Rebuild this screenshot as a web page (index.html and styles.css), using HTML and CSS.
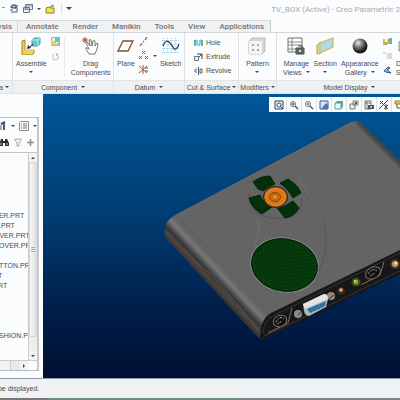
FILE: index.html
```html
<!DOCTYPE html>
<html lang="en">
<head>
<meta charset="utf-8">
<title>TV_BOX (Active) - Creo Parametric 2</title>
<link rel="stylesheet" href="styles.css">
</head>
<body>
<div class="app">
  <header class="titlebar">
    <div class="quick">
      <span class="dot"></span>
      <button aria-label="Regenerate"><svg width="10" height="10" viewBox="0 0 10 10"><path d="M1 3h3M1 6h3M2 8h6V5" fill="none" stroke="#557" /><path d="M3 1h4v3H3z" fill="#a8cce0" stroke="#345"/><path d="M6 4l3-3M9 4H6" stroke="#258" fill="none"/></svg></button>
      <button aria-label="Windows"><svg width="10" height="10" viewBox="0 0 10 10"><path d="M2.500 .5h7v5h-7zM.5 3.500h6v5h-6z" fill="#e9eef3" stroke="#678"/><path d="M3 2h6M1 5h5" stroke="#89a"/></svg><i class="caret"></i></button>
      <button aria-label="Close window"><svg width="10" height="10" viewBox="0 0 10 10"><path d="M1 4l3-1 1 1h4v5H1z" fill="#f5e04c" stroke="#8d8228"/><path d="M5 3l3-2v2" fill="none" stroke="#575"/></svg></button>
      <button class="more" aria-label="Customize"><i class="caret big"></i></button>
    </div>
    <h1>TV_BOX (Active) - Creo Parametric 2</h1>
  </header>
  <nav class="tabs">
    <button class="cut">Analysis</button><button>Annotate</button><button>Render</button><button>Manikin</button><button>Tools</button><button>View</button><button>Applications</button>
  </nav>
  <div class="ribbon">
    <section class="group data"><div class="tools"></div><h2>Data<i class="caret"></i></h2></section>
    <section class="group component">
      <div class="tools">
        <button class="tool">
          <svg width="20" height="18" viewBox="0 0 20 18"><path d="M1 4l3-1v10h9v3l-2 2H1z" fill="#efcf54" stroke="#a98a26"/><path d="M4 13h9" stroke="#fff0a0"/><path d="M11 3l2-2h6v6l-2 2h-6z" fill="#66c6d2" stroke="#4c9ca8"/><path d="M11 3h6v6M17 3l2-2" fill="none" stroke="#c4f2f5"/><path d="M12 7l-4 4" stroke="#222"/><path d="M6 12l4-1-3-3z" fill="#222"/></svg>
          <span>Assemble</span><i class="caret"></i></button>
        <div class="stack pair">
          <button aria-label="Create"><svg width="9" height="9" viewBox="0 0 9 9"><path d="M.5 .5h8v8h-8z" fill="#e3f3f1" stroke="#9ba"/><path d="M0 4h5v4H0z" fill="#f0d040"/><path d="M4 0h5v5H4z" fill="#58c8c4"/><path d="M6 6h2v2H6z" fill="#d99"/></svg></button>
          <button aria-label="Repeat"><svg width="9" height="9" viewBox="0 0 9 9"><path d="M2 2v4q0 2 2.500 2T7 6V4L5 2" fill="none" stroke="#bbb"/><path d="M5 1l3 1-3 2z" fill="#bbb"/></svg></button>
        </div>
        <button class="tool drag">
          <svg width="18" height="18" viewBox="0 0 18 18"><path d="M1 1l4 4M5 1L1 5M3 0v6M0 3h6" stroke="#a65b2a"/><path d="M7 17l-3-5q-1-2 1-1l2 1-3-6q0-1 1-1l3 4-1-6q1-1 2 0l1 6 1-5q1-1 2 0v5l2-3q1 0 1 1l-1 5-2 5z" fill="#fff" stroke="#555" stroke-width=".8"/></svg>
          <span>Drag</span><span>Components</span></button>
      </div>
      <h2>Component<i class="caret"></i></h2>
    </section>
    <section class="group datum">
      <div class="tools">
        <button class="tool"><svg width="18" height="18" viewBox="0 0 18 18"><path d="M6 4h10l-5 10H1z" fill="#fffdfa" stroke="#80502f" stroke-width="1.300"/></svg><span>Plane</span></button>
        <div class="stack triple">
          <button aria-label="Axis"><svg width="9" height="9" viewBox="0 0 9 9"><path d="M1 9l2-3M4 5l1-1M6 3l2-3" stroke="#a25b35" stroke-width="1.300"/></svg></button>
          <button aria-label="Point" class="wide"><svg width="10" height="9" viewBox="0 0 10 9"><path d="M3 0l3 3M6 0L3 3M0 5l3 3M3 5L0 8M6 5l3 3M9 5L6 8" stroke="#a25b35"/></svg><i class="caret"></i></button>
          <button aria-label="Coordinate system"><svg width="9" height="9" viewBox="0 0 9 9"><path d="M0 1l8 7M0 8l8-7M4 0v9" stroke="#a25b35"/><path d="M6 3h3M6 6h3" stroke="#654"/></svg></button>
        </div>
        <button class="tool sketch"><svg width="18" height="18" viewBox="0 0 18 18"><path d="M1.500 1v16M5.500 1v16M9.500 1v16M13.500 1v16M0 3.500h18M0 7.500h18M0 11.500h18M0 15.500h18" stroke="#a9cfe8" stroke-dasharray="1 1"/><path d="M1 9Q4 1 8 6T12 12Q15 13 17 7" fill="none" stroke="#27466e" stroke-width="1.300"/></svg><span>Sketch</span></button>
      </div>
      <h2>Datum<i class="caret"></i></h2>
    </section>
    <section class="group surface">
      <div class="tools rows">
        <button><svg width="9" height="8" viewBox="0 0 9 8"><path d="M0 1h2v6H0zM7 1h2v6H7z" fill="#4cb8b8"/><path d="M2 1h1v5h3V1h1" fill="#d5f4f2" stroke="#4aa"/></svg>Hole</button>
        <button><svg width="9" height="8" viewBox="0 0 9 8"><path d="M.5 3.500h4v4h-4z" fill="#dff0ee" stroke="#678"/><path d="M3 1h5v5M5 4l3-3" fill="none" stroke="#345"/></svg>Extrude</button>
        <button><svg width="9" height="8" viewBox="0 0 9 8"><path d="M4.500 0v8" stroke="#555"/><path d="M3 2Q0 2 1 5h2M6 2h2v4H6z" fill="none" stroke="#567"/></svg>Revolve</button>
      </div>
      <h2>Cut &amp; Surface<i class="caret"></i></h2>
    </section>
    <section class="group modifiers">
      <div class="tools">
        <button class="tool"><svg width="18" height="18" viewBox="0 0 18 18"><path d="M1 4l3-3h13v13l-3 3H1z" fill="#d5d5d5" stroke="#bbb"/><path d="M1 4h13v13H1z" fill="#f5f5f5"/><path d="M4 7h2v2H4zM9 7h2v2H9zM4 12h2v2H4zM9 12h2v2H9z" fill="#a5a5a5"/></svg><span>Pattern</span><i class="caret"></i></button>
      </div>
      <h2>Modifiers<i class="caret"></i></h2>
    </section>
    <section class="group display">
      <div class="tools">
        <button class="tool"><svg width="18" height="18" viewBox="0 0 18 18"><path d="M1 1h14v14H1z" fill="#fff" stroke="#707070"/><path d="M1 5h14M1 8h14M1 12h14M5 1v14" stroke="#888"/><path d="M9 11h8v6H9z" fill="#777" stroke="#444"/><path d="M11 9h4v2" fill="none" stroke="#444"/><circle cx="13" cy="14" r="2" fill="#ddd" stroke="#333"/></svg><span>Manage</span><span>Views<i class="caret"></i></span></button>
        <button class="tool"><svg width="18" height="18" viewBox="0 0 18 18"><path d="M1 8l4-3v11l-4 1z" fill="#efd48c" stroke="#b89a54"/><path d="M4 6l13-5v9L4 16z" fill="#a9dcef" stroke="#d8bd6c" stroke-width="1.400"/></svg><span>Section</span><i class="caret"></i></button>
        <button class="tool"><svg width="18" height="18" viewBox="0 0 18 18"><defs><radialGradient id="ball" cx=".38" cy=".3" r=".7"><stop offset="0" stop-color="#eee"/><stop offset=".35" stop-color="#888"/><stop offset=".8" stop-color="#222"/><stop offset="1" stop-color="#111"/></radialGradient></defs><circle cx="9" cy="9" r="7.500" fill="url(#ball)"/></svg><span>Appearance</span><span>Gallery<i class="caret"></i></span></button>
        <div class="stack triple last">
          <button aria-label="Layers"><svg width="9" height="9" viewBox="0 0 9 9"><path d="M0 2h2v6H0zM4 2h2v5H4z" fill="#e2b43c"/><path d="M2 5h2v3H2zM6 1h3v6H6z" fill="#60b6b0"/></svg></button>
          <button aria-label="Status"><svg width="9" height="9" viewBox="0 0 9 9"><path d="M0 2h3M4 3h5M4 5h5M4 7h5" stroke="#bbb"/></svg></button>
          <button aria-label="Perspective"><svg width="9" height="9" viewBox="0 0 9 9"><path d="M1 6l4-4 2 1-3 2 4 3-5-1z" fill="#a6cce6" stroke="#285080"/></svg></button>
        </div>
        <button class="tool style"><svg width="18" height="18" viewBox="0 0 18 18"><path d="M1 5l4-4h13v13H1z" fill="#a7e0d0" stroke="#6baa9c"/></svg><span>Display</span><span>Style<i class="caret"></i></span></button>
      </div>
      <h2>Model Display<i class="caret"></i></h2>
    </section>
  </div>
  <main class="work">
    <aside class="side">
      <div class="panel">
        <div class="bar"><button aria-label="Settings"><svg width="7" height="10" viewBox="0 0 7 10"><path d="M0 4h2v5H0z" fill="#caa568"/><path d="M4 1v8M1 3l4-2" stroke="#35599b" stroke-width="2"/></svg></button><i class="caret"></i><button aria-label="Show"><svg width="10" height="10" viewBox="0 0 10 10"><path d="M.5 1.500l1-1h8v9h-9z" fill="#fafafa" stroke="#8c8c8c"/><path d="M2 3h1M4 3h4M2 5h1M4 5h4M2 7h1M4 7h4" stroke="#777"/></svg></button><i class="caret"></i></div>
        <div class="bar find"><button aria-label="Find"><svg width="9" height="9" viewBox="0 0 9 9"><path d="M0 8V4l1-3h2v7zM5 8V1h2l2 4v3H6z" fill="#2f2f2f"/><path d="M3 4h3" stroke="#222" stroke-width="2"/><path d="M1 5v2M7 5v2" stroke="#ccc"/></svg></button><button aria-label="Filter"><svg width="8" height="9" viewBox="0 0 8 9"><path d="M.5 1h7L5 5v3H3V5z" fill="#f3f3f3" stroke="#aaa"/></svg></button><button aria-label="Add"><svg width="7" height="7" viewBox="0 0 7 7"><path d="M3.500 0v7M0 3.500h7" stroke="#8c8c8c" stroke-width="1.500"/></svg></button></div>
        <div class="tree">
          <ul><li>VER.PRT</li><li>R.PRT</li><li>OVER.PRT</li><li>COVER.PRT</li><li></li><li>UTTON.PRT</li><li class="in">T</li><li class="in">RT</li><li></li><li></li><li></li><li></li><li>USHION.PRT</li></ul>
          <div class="vscroll"><b><i class="caret up"></i></b><span class="thumb"><i class="grip"></i></span><b><i class="caret"></i></b></div>
        </div>
        <div class="hscroll"><span class="thumb"></span><span class="track"></span><b><i class="caret right"></i></b></div>
      </div>
    </aside>
    <div class="canvas">
      <svg class="model" viewBox="43 94 357 284" preserveAspectRatio="xMinYMin slice" role="img" aria-label="TV box model">
        <defs>
          <linearGradient id="side" gradientUnits="userSpaceOnUse" x1="206" y1="286" x2="224" y2="269"><stop offset="0" stop-color="#202020"/><stop offset=".3" stop-color="#4b4540"/><stop offset=".48" stop-color="#363636"/><stop offset=".75" stop-color="#777"/><stop offset="1" stop-color="#626262"/></linearGradient>
          <linearGradient id="edge" gradientUnits="userSpaceOnUse" x1="376" y1="146" x2="381" y2="141"><stop offset="0" stop-color="#646464"/><stop offset="1" stop-color="#333"/></linearGradient>
          <pattern id="mesh" width="5" height="5" patternUnits="userSpaceOnUse" patternTransform="rotate(28)"><rect width="5" height="5" fill="#063d0c"/><circle cx="1.500" cy="1.500" r="1" fill="#032506"/><circle cx="4" cy="4" r="1" fill="#04300a"/></pattern>
        </defs>
        <path d="M165 230Q166 220 174 216L350 123Q357 119 362 124L404 165V270L290 326L266 338Q261 340 257 336L168 240Q164 236 165 230z" fill="#646464"/>
        <path d="M165 230Q166 220 174 216L185 221L270 309L264 338Q260 340 257 336L168 240Q164 236 165 230z" fill="url(#side)"/>
        <path d="M167 232L196 262L212 275L258 329" fill="none" stroke="#6b5a4b" stroke-width=".7"/>
        <path d="M357 121L362 124L404 165V175L355 125z" fill="url(#edge)"/>
        <path d="M174 216L352 122" stroke="#756f69" stroke-width=".8"/>
        <path d="M260 338Q260 319 271 313L404 248V272L290 327L264 339z" fill="#171717"/>
        <path d="M263 333Q264 321 273 316L404 251" fill="none" stroke="#4a4a4a" stroke-width=".6"/>
        <path d="M264 336L290 324L404 269" fill="none" stroke="#353535" stroke-width="1"/>
        <path d="M307 194Q329 220 326 246Q325 262 314 280" fill="none" stroke="#4e4e4e" stroke-width=".6"/>
        <path d="M249 193Q248 211 263 216Q280 221 293 216Q302 211 302 198" fill="none" stroke="#484848" stroke-width=".6"/>
        <path d="M258 219Q261 233 254 247M299 180Q316 205 323 222" fill="none" stroke="#7b7b7b" stroke-width=".6"/>
        <g fill="#043009" stroke="#031d05" stroke-width=".8"><path d="M253 182Q260 176 270 176L275 184Q269 186 263 191L258 189z"/><path d="M249 198L260 195Q263 203 272 207L262 214Q252 209 249 198z"/><path d="M280 183L288 179Q298 185 301 193L293 198Q289 190 280 183z"/><path d="M277 208Q285 207 293 201L299 208Q294 217 285 218z"/></g>
        <ellipse cx="275.500" cy="197" rx="12" ry="10.500" fill="#b86112" stroke="#271d12" stroke-width="1"/>
        <ellipse cx="275.500" cy="197" rx="10" ry="8.500" fill="#d97813" stroke="#ef9f43" stroke-width=".7"/>
        <ellipse cx="275" cy="197" rx="5.500" ry="4.500" fill="#c8690f" stroke="#8c4708"/>
        <circle cx="275" cy="197" r="2" fill="#e18e35"/>
        <ellipse cx="284.500" cy="265" rx="34" ry="27" transform="rotate(10 284.500 265)" fill="url(#mesh)" stroke="#8b8b8b"/>
        <ellipse cx="284.500" cy="265" rx="33" ry="26" transform="rotate(10 284.500 265)" fill="none" stroke="#042307"/>
        <g fill="none" stroke="#836f62"><path d="M268 333L288 323L292 308" /><ellipse cx="280" cy="321" rx="7" ry="5.500" transform="rotate(-28 280 321)" fill="#111"/><path d="M276 322q4-7 8-3M277 324l5-3" stroke="#b5a091" stroke-dasharray="2 1"/><path d="M361 285L380 275L384 262"/><ellipse cx="373" cy="273" rx="8" ry="5.500" transform="rotate(-28 373 273)" fill="#111"/><path d="M368 274q5-7 9-3M370 276l5-3" stroke="#b5a091" stroke-dasharray="2 1"/></g>
        <circle cx="298" cy="314" r="4" fill="#8d8985"/><circle cx="331" cy="296" r="4" fill="#8d8985"/><path d="M298 315l5-5M329 299l5-4" stroke="#333"/>
        <path d="M303 304L324 294Q328 294 328 299L326 307L309 316Q305 316 304 311z" fill="#aeb7bd"/>
        <path d="M303 304L324 294Q328 294 328 299L305 309z" fill="#e4e4e4"/>
        <path d="M307 309L326 301L325 306L310 313z" fill="#367ba9"/><path d="M309 310l15-6M311 312l12-5" stroke="#123e60" stroke-dasharray="1 2"/>
        <circle cx="341" cy="291" r="4" fill="#352820"/><circle cx="341" cy="290" r="2" fill="#bd7f50"/><circle cx="341" cy="290" r="1" fill="#e6c394"/>
        <circle cx="356" cy="282" r="4.500" fill="#354b13"/><circle cx="356" cy="282" r="2.500" fill="#82a52d"/><circle cx="355" cy="281" r="1" fill="#e3e0a4"/>
        <circle cx="395" cy="264" r="5" fill="#4a3622"/><circle cx="395" cy="264" r="3" fill="#c69d60"/><circle cx="396" cy="263" r="1.500" fill="#f1e8ba"/>
      </svg>
      <div class="viewbar">
        <button aria-label="Refit"><svg viewBox="0 0 10 10"><path d="M1 1h8v8H1z" fill="#e4edf8" stroke="#345"/><circle cx="5" cy="5" r="2" fill="#fff" stroke="#357"/><path d="M6 6l3 3" stroke="#246"/></svg></button>
        <button aria-label="Zoom in"><svg viewBox="0 0 10 10"><circle cx="4" cy="4" r="2.500" fill="#eee" stroke="#777"/><path d="M3 4h2M4 3v2" stroke="#333"/><path d="M6 6l3 3" stroke="#555" stroke-width="1.500"/></svg></button>
        <button aria-label="Zoom out"><svg viewBox="0 0 10 10"><circle cx="4" cy="4" r="2.500" fill="#eee" stroke="#777"/><path d="M3 4h2" stroke="#333"/><path d="M6 6l3 3" stroke="#555" stroke-width="1.500"/></svg></button>
        <button aria-label="Repaint"><svg viewBox="0 0 10 10"><path d="M1 1h8v8H1z" fill="#dbe8fa" stroke="#36548a"/><path d="M2 9l5-6 2 2v4z" fill="#4b79b5"/></svg></button>
        <button aria-label="Display style"><svg viewBox="0 0 10 10"><path d="M1 3l2-2h6v6L7 9H1z" fill="#4fa9b2"/><path d="M1 3h6v6H1z" fill="#e9fafa" stroke="#699"/></svg></button>
        <button aria-label="Saved orientations"><svg viewBox="0 0 10 10"><path d="M1 4h5v5H1zM4 1h5v4H4z" fill="#edf2f5" stroke="#777"/><path d="M6 2h2v2H6z" fill="#555"/></svg></button>
        <button aria-label="View manager"><svg viewBox="0 0 10 10"><path d="M1 1h6v8H1zM1 3h6M3 1v8" fill="#fff" stroke="#777"/><path d="M4 5h6v4H4z" fill="#555"/><circle cx="7" cy="7" r="1" fill="#ddd"/></svg></button>
        <button aria-label="Datum display"><svg viewBox="0 0 10 10"><path d="M1 1l3 3M4 1L1 4M0 9l9-9M5 5l4 4M9 5L5 9M7 4v6" stroke="#56483f"/></svg></button>
        <button aria-label="Annotations"><svg viewBox="0 0 10 10"><path d="M1 1h8v3H1z" fill="#e6cf3f" stroke="#998622"/><path d="M3 4v4h6" fill="none" stroke="#555"/></svg></button>
      </div>
    </div>
  </main>
  <footer class="status">cannot be displayed.</footer>
  <div class="taskbar"></div>
</div>
</body>
</html>
```
FILE: styles.css
```css
* { box-sizing: border-box; }
body { margin: 0; font: 7px/9px "Liberation Sans", Arial, sans-serif; color: #4b4b4b; background: #fbfcfd; overflow: hidden; }
button { display: flex; align-items: center; margin: 0; padding: 0; border: 0; background: none; font: inherit; color: inherit; white-space: nowrap; }
svg { display: block; flex: none; }
h1, h2 { margin: 0; font-weight: normal; white-space: nowrap; }
.app { display: grid; grid-template-rows: 20px 13px 61px 1fr 20px 2px; grid-template-columns: 100%; height: 100vh; }
.app > * { min-width: 0; overflow: hidden; }

.caret { display: inline-block; flex: none; width: 0; height: 0; border: 2px solid transparent; border-top-color: #444; border-bottom: 0; }
.caret.big { border-width: 3px 3px 0; }
.caret.up { border-top: 0; border-bottom: 2px solid #444; }
.caret.right { border: 2px solid transparent; border-left-color: #444; border-right: 0; }

.titlebar { display: flex; justify-content: space-between; }
.quick { display: flex; gap: 4px; padding: 3px 0 6px 2px; }
.quick button { gap: 4px; }
.quick .more { margin-left: 2px; padding-left: 4px; border-left: 1px solid #e0e0e0; }
.dot { width: 3px; height: 1px; margin-top: 4px; background: #999; }
.titlebar h1 { flex: none; padding-top: 5px; font: 8px/9px Roboto, sans-serif; color: #a9a9ad; }

.tabs { display: flex; background: #fbfcfd; border-bottom: 1px solid #d5d8db; }
.tabs button { padding: 0 6px; border-top: 1px solid #d5d8db; background: #eff1f3; font: 500 8px/11px Roboto, sans-serif; color: #737373; }
.tabs .cut { width: 18px; padding: 0 5px 0 0; justify-content: flex-end; border-right: 1px solid #d5d8db; }
.tabs button + button { padding-left: 8px; }
.tabs button:last-child { border-right: 1px solid #c5c8cb; }

.ribbon { display: grid; grid-template-columns: 13px 101px 71px 54px 38px minmax(146px, 1fr); }
.group { display: grid; grid-template-rows: 47px 14px; grid-template-columns: 100%; border-right: 1px solid #dfe2e5; }
.group h2 { display: flex; align-items: center; justify-content: center; gap: 4px; border-top: 1px solid #e2e4e6; background: #eef0f2; border-bottom: 1px solid #e2e4e6; font-size: 7px; }
.group.data h2 { justify-content: flex-end; gap: 2px; padding-right: 3px; overflow: hidden; }
.modifiers h2, .surface h2 { gap: 2px; }
.tools { display: flex; align-items: flex-start; padding-top: 4px; }
.tool { flex-direction: column; }
.tool svg { margin-bottom: 4px; }
.tool > .caret { margin-top: 3px; }
.tool span .caret { margin: 0 0 2px 4px; }
.stack { display: grid; }
.component .tools { padding-left: 3px; }
.pair { gap: 6px; margin-left: 4px; }
.drag { margin-left: 4px; padding-left: 6px; border-left: 1px solid #e9eaec; }
.datum .tools { padding-left: 3px; }
.triple { gap: 5px; margin-left: 4px; }
.wide { gap: 4px; }
.sketch { margin-left: 3px; }
.tools.rows { display: grid; align-content: start; gap: 5px; padding: 5px 0 0 9px; }
.rows button { gap: 3px; }
.modifiers .tools { justify-content: center; }
.display .tools { gap: 4px; padding-left: 6px; }
.display .last { margin-left: 0; }

.work { display: grid; grid-template-columns: 43px 1fr; min-height: 0; }
.side { display: flex; padding: 23px 3px 7px 0; min-height: 0; background: #fbfcfd; border-right: 1px solid #fff; }
.panel { display: flex; flex-direction: column; flex: 1; min-width: 0; border: 1px solid #b8bbc0; border-left: 0; border-right: 2px solid #c5c8cd; }
.bar { display: flex; align-items: center; flex: none; height: 15px; gap: 4px; }
.find { height: 20px; gap: 5px; border-bottom: 1px solid #c5c5c5; }
.tree { display: flex; flex: 1; min-height: 0; }
.tree ul { flex: 1; min-width: 0; margin: 0; padding: 58px 0 0; overflow: hidden; list-style: none; }
.tree li { height: 10px; margin-left: -6px; line-height: 10px; white-space: nowrap; }
.tree .in { padding-left: 4px; }
.vscroll { display: flex; flex-direction: column; width: 9px; border-left: 1px solid #ccc; background: #eee; }
.vscroll b, .hscroll b { display: flex; align-items: center; justify-content: center; flex: none; height: 9px; width: 8px; background: #f2f3f4; }
.vscroll .thumb { display: flex; align-items: center; justify-content: center; flex: 0 1 175px; border: 1px solid #d5d8da; background: linear-gradient(90deg, #f8f8f8, #dedfe2); }
.grip { width: 4px; height: 5px; background: repeating-linear-gradient(#aaa 0 1px, transparent 1px 2px); }
.vscroll b:last-child { margin-top: auto; }
.hscroll { display: flex; flex: none; height: 10px; border-top: 1px solid #ccc; }
.hscroll .thumb { flex: 1; background: #f1f2f3; border-right: 1px solid #ccc; }
.hscroll .track { width: 9px; background: #eaeaea; }
.hscroll b { margin-right: 9px; }

.canvas { position: relative; min-width: 0; overflow: hidden; background: linear-gradient(#005798, #003b70 45%, #001f4b 75%, #000f32); }
.model { width: 100%; height: 100%; }
.viewbar { position: absolute; top: 3px; right: 0; display: flex; width: 131px; height: 15px; padding-left: 3px; overflow: hidden; background: #fbfcfd; }
.viewbar button { flex: none; justify-content: center; width: 15px; border-right: 1px solid #dde0e3; }
.viewbar svg { width: 10px; height: 10px; }

.status { display: flex; align-items: center; padding: 0 0 1px; border-top: 1px solid #8f9ab0; background: #eff1f3; font-size: 7px; text-indent: -25px; }
.taskbar { background: linear-gradient(90deg, #777 0 12%, #6d8c88 12% 60%, #7b8488 60%); }
```
